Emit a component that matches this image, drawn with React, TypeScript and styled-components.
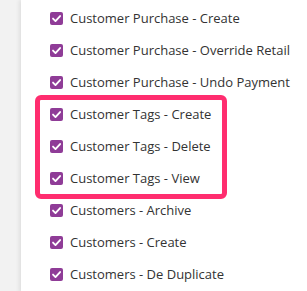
import styled, { createGlobalStyle } from "styled-components"

const GlobalStyle = createGlobalStyle`
  html, body {
    margin: 0;
    padding: 0;
    background: #f2f2f2;
  }
`

const permissions = [
  "Customer Purchase - Create",
  "Customer Purchase - Override Retail",
  "Customer Purchase - Undo Payment",
]

const tagPermissions = ["Customer Tags - Create", "Customer Tags - Delete", "Customer Tags - View"]

const customerPermissions = ["Customers - Archive", "Customers - Create", "Customers - De Duplicate"]

const Check = () => (
  <Box>
    <svg width="11" height="11" viewBox="0 0 12 12">
      <path d="M2.2 6.1 L4.9 8.8 L9.9 3.3" fill="none" stroke="#fff" strokeWidth="2" strokeLinecap="round" strokeLinejoin="round" />
    </svg>
  </Box>
)

const Row = ({ label }: { label: string }) => (
  <Item>
    <Check />
    <Label>{label}</Label>
  </Item>
)

const App = () => {
  return (
    <Page>
      <GlobalStyle />
      <Panel>
        {permissions.map((p) => (
          <Row key={p} label={p} />
        ))}
        <Highlight>
          {tagPermissions.map((p) => (
            <Row key={p} label={p} />
          ))}
        </Highlight>
        {customerPermissions.map((p) => (
          <Row key={p} label={p} />
        ))}
      </Panel>
    </Page>
  )
}

export default App

const Page = styled.div`
  width: 307px;
  height: 291px;
  overflow: hidden;
  background: #f2f2f2;
  padding-left: 21px;
  box-sizing: border-box;
`

const Panel = styled.div`
  background: #fff;
  height: 100%;
  box-shadow: -2px 0 4px rgba(0, 0, 0, 0.08);
  padding-top: 2px;
  display: flex;
  flex-direction: column;
`

// frame drawn over the highlighted rows, rows keep their normal rhythm
const Highlight = styled.div`
  position: relative;

  &::after {
    content: "";
    position: absolute;
    left: 14px;
    width: 192px;
    top: -3px;
    bottom: -5px;
    box-sizing: border-box;
    border: 5px solid #ff2d6f;
    border-radius: 6px;
    pointer-events: none;
  }
`

const Item = styled.div`
  display: flex;
  align-items: center;
  height: 32px;
  padding-left: 29px;
  gap: 7px;
`

const Box = styled.span`
  width: 13px;
  height: 13px;
  border-radius: 2px;
  background: #8f3c97;
  display: flex;
  align-items: center;
  justify-content: center;
  flex-shrink: 0;
`

const Label = styled.span`
  font-family: "Open Sans", sans-serif;
  font-size: 13px;
  color: #333;
  white-space: nowrap;
`
